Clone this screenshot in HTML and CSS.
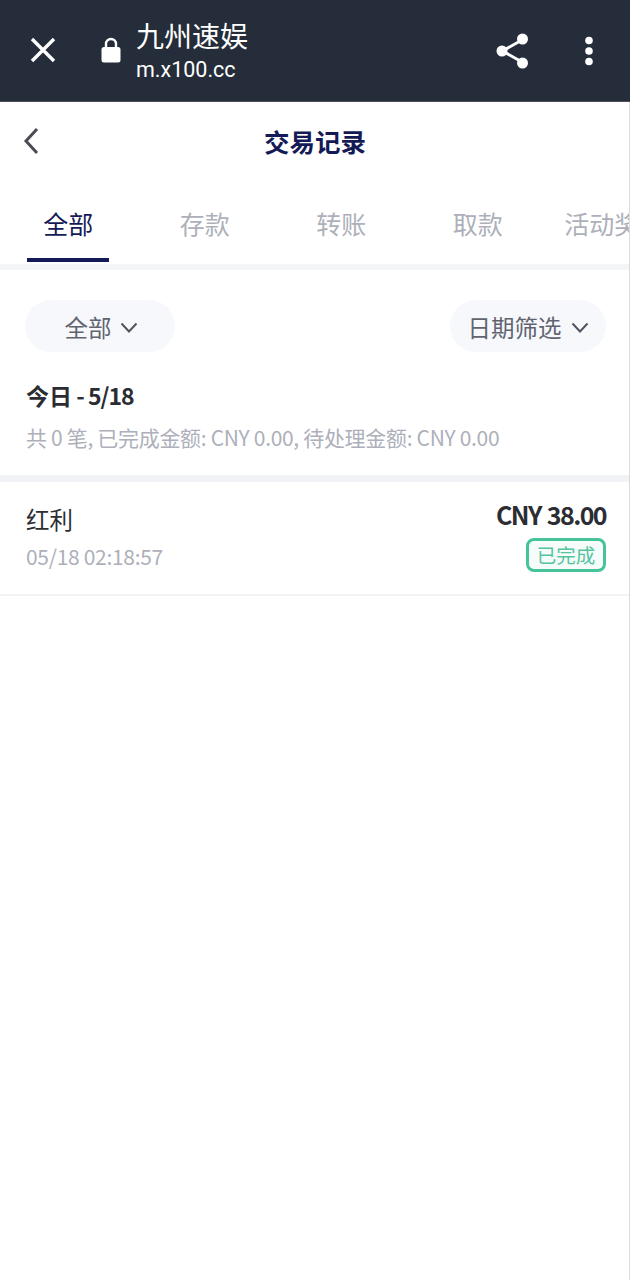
FILE: index.html
```html
<!DOCTYPE html>
<html>
<head>
<meta charset="utf-8">
<title>交易记录</title>
<link rel="stylesheet" href="styles.css">
</head>
<body>
<header class="browserbar">
    <svg class="close" width="26" height="26" viewBox="0 0 26 26"><path d="M2 2 L24 24 M24 2 L2 24" stroke="#fff" stroke-width="3.4" fill="none"/></svg>
    <svg class="lock" width="20" height="26" viewBox="0 0 20 26"><path d="M5 11 V7 a5 5 0 0 1 10 0 V11" stroke="#fff" stroke-width="2.4" fill="none"/><rect x="0.5" y="10" width="19" height="15.5" rx="2.5" fill="#fff"/></svg>
    <div class="site">
        <div class="site__name">九州速娱</div>
        <div class="site__url">m.x100.cc</div>
    </div>
    <svg class="share" width="33" height="36" viewBox="0 0 33 36"><path d="M26 7 L6.5 18 L26 29" stroke="#fff" stroke-width="3" fill="none"/><circle cx="26.5" cy="6" r="5.5" fill="#fff"/><circle cx="6" cy="18" r="5.5" fill="#fff"/><circle cx="26.5" cy="30" r="5.5" fill="#fff"/></svg>
    <svg class="more" width="10" height="30" viewBox="0 0 10 30"><circle cx="5" cy="4.5" r="3.8" fill="#fff"/><circle cx="5" cy="15" r="3.8" fill="#fff"/><circle cx="5" cy="25.5" r="3.8" fill="#fff"/></svg>
</header>

<main class="page">
    <div class="topnav">
        <svg class="back" width="16" height="28" viewBox="0 0 16 28"><path d="M14 2 L3 14 L14 26" stroke="#4a4d55" stroke-width="3" fill="none"/></svg>
        <h1 class="topnav__title">交易记录</h1>
    </div>

    <ul class="tabs">
        <li class="tab tab--active">全部</li>
        <li class="tab">存款</li>
        <li class="tab">转账</li>
        <li class="tab">取款</li>
        <li class="tab">活动奖励</li>
    </ul>

    <section class="summary">
        <div class="filters">
            <div class="pill pill--all">全部
                <svg width="18" height="12" viewBox="0 0 18 12"><path d="M1.5 1.5 L9 9.5 L16.5 1.5" stroke="#50545f" stroke-width="2" fill="none"/></svg>
            </div>
            <div class="pill pill--date">日期筛选
                <svg width="18" height="12" viewBox="0 0 18 12"><path d="M1.5 1.5 L9 9.5 L16.5 1.5" stroke="#50545f" stroke-width="2" fill="none"/></svg>
            </div>
        </div>
        <h2 class="summary__date">今日<span class="tight"> - 5/18</span></h2>
        <p class="summary__text">共 0 笔, 已完成金额: CNY 0.00, 待处理金额: CNY 0.00</p>
    </section>

    <div class="record">
        <div>
            <div class="record__name">红利</div>
            <div class="record__time">05/18 02:18:57</div>
        </div>
        <div class="record__right">
            <div class="record__amount">CNY 38.00</div>
            <div class="badge">已完成</div>
        </div>
    </div>
</main>
</body>
</html>
```

FILE: styles.css
```css
* {
    margin: 0;
    padding: 0;
    box-sizing: border-box;
}

body {
    background: #fff;
    font-family: "Noto Sans CJK SC", "Noto Sans", sans-serif;
    overflow: hidden;
}

.browserbar {
    display: flex;
    align-items: center;
    height: 102px;
    background: #252d3a;
    border-bottom: 1px solid #4a505a;
    color: #fff;
}

.close {
    margin-left: 30px;
    margin-top: -2px;
    flex: none;
}

.lock {
    margin-left: 45px;
    margin-top: -2px;
    flex: none;
}

.site {
    margin-left: 15px;
    padding-top: 4px;
    flex: 1;
}

.site__name {
    font-size: 28px;
    line-height: 36px;
    margin-top: -3px;
}

.site__url {
    font-family: Roboto, sans-serif;
    font-size: 21.5px;
    line-height: 30px;
    margin-top: 2px;
}

.share {
    margin-right: 55px;
    flex: none;
}

.more {
    margin-right: 36px;
    flex: none;
}

.page {
    height: 1178px;
    border-right: 1px solid #dcdcdc;
}

.topnav {
    position: relative;
    height: 83px;
    padding-bottom: 6px;
    display: flex;
    align-items: center;
    justify-content: center;
}

.back {
    position: absolute;
    left: 23px;
    top: 25px;
}

.topnav__title {
    font-size: 25.5px;
    font-weight: 700;
    color: #141a56;
    margin-left: 1px;
}

.tabs {
    display: flex;
    list-style: none;
    height: 79px;
    overflow: hidden;
}

.tab {
    flex: none;
    width: 136.5px;
    text-align: center;
    font-size: 25px;
    line-height: 76px;
    color: #adb0ba;
    white-space: nowrap;
    position: relative;
}

.tab--active {
    color: #141a56;
}

.tab--active::after {
    content: "";
    position: absolute;
    left: 27px;
    bottom: 2px;
    width: 82px;
    height: 4px;
    background: #141a56;
}

.summary {
    border-top: 6px solid #f4f5f7;
    border-bottom: 7px solid #f1f2f5;
    padding: 30px 23px 0 25px;
    height: 218px;
}

.filters {
    display: flex;
    justify-content: space-between;
}

.pill {
    display: flex;
    align-items: center;
    justify-content: center;
    gap: 8px;
    height: 52px;
    padding-top: 2px;
    border-radius: 26px;
    background: #f7f8fc;
    font-size: 23.5px;
    color: #61646f;
}

.pill svg {
    margin-top: 2px;
}

.pill--all {
    width: 150px;
    padding-left: 2px;
}

.pill--date {
    width: 156px;
    gap: 9px;
}

.summary__date {
    margin-top: 27px;
    margin-left: 1px;
    font-size: 23px;
    line-height: 32px;
    font-weight: 700;
    color: #2b2d33;
}

.tight {
    letter-spacing: -1px;
}

.summary__text {
    margin-top: 10px;
    margin-left: 1px;
    font-size: 21px;
    line-height: 32px;
    color: #adb0ba;
    letter-spacing: -0.32px;
    white-space: nowrap;
}

.record {
    display: flex;
    justify-content: space-between;
    height: 114px;
    padding: 16px 23px 0 26px;
    border-bottom: 2px solid #f1f2f5;
}

.record__name {
    margin-top: 4px;
    font-size: 23.5px;
    line-height: 34px;
    color: #2b2d33;
}

.record__time {
    margin-top: 5px;
    font-size: 21px;
    line-height: 30px;
    letter-spacing: -0.3px;
    color: #adb0ba;
}

.record__right {
    display: flex;
    flex-direction: column;
    align-items: flex-end;
}

.record__amount {
    font-size: 25px;
    line-height: 32px;
    font-weight: 700;
    letter-spacing: -1.6px;
    word-spacing: 2px;
    color: #2b2d33;
}

.badge {
    margin-top: 8px;
    width: 80px;
    height: 34px;
    border: 3px solid #45c49a;
    border-radius: 8px;
    background: #f5fcf9;
    text-align: center;
    font-size: 19.5px;
    line-height: 28px;
    color: #55c4a0;
}
```
